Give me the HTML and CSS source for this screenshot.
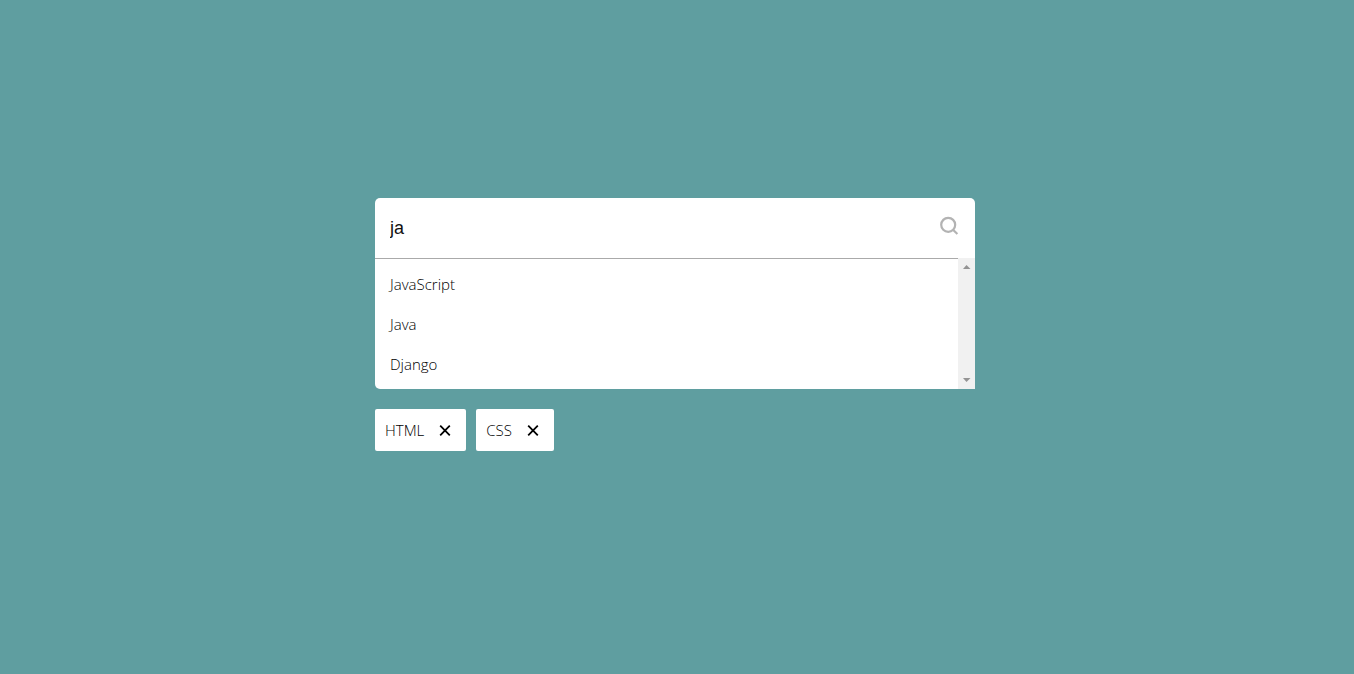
FILE: index.html
```
<!DOCTYPE html>
<html lang="en">
<head>
<meta charset="utf-8">
<meta name="viewport" content="width=device-width, initial-scale=1">
<title>Skill search</title>
<link rel="stylesheet" href="styles.css">
</head>
<body>
<main class="picker">
  <div class="search">
    <div class="field">
      <input class="input" type="text" value="ja" aria-label="Search skills">
      <svg class="search-icon" viewBox="0 0 20 20" aria-hidden="true"><circle cx="8.2" cy="8.8" r="7"/><path d="M13 13.7l4.4 4.3"/></svg>
    </div>
    <div class="results">
      <ul class="options">
        <li class="option">JavaScript</li>
        <li class="option">Java</li>
        <li class="option">Django</li>
      </ul>
      <div class="scrollbar" aria-hidden="true">
        <svg class="arrow" viewBox="0 0 8 4"><path d="M0 4L3.5 0L7.5 4z"/></svg>
        <svg class="arrow" viewBox="0 0 8 4"><path d="M0 0L3.5 4L7.5 0z"/></svg>
      </div>
    </div>
  </div>
  <ul class="tags">
    <li class="tag">HTML
      <button class="remove" type="button" aria-label="Remove HTML"><svg class="cross" viewBox="0 0 12 12" aria-hidden="true"><path d="M1.2 1.7l9.6 9.6M10.8 1.7l-9.6 9.6"/></svg></button>
    </li>
    <li class="tag">CSS
      <button class="remove" type="button" aria-label="Remove CSS"><svg class="cross" viewBox="0 0 12 12" aria-hidden="true"><path d="M1.2 1.7l9.6 9.6M10.8 1.7l-9.6 9.6"/></svg></button>
    </li>
  </ul>
</main>
</body>
</html>
```
FILE: styles.css
```
* {
  box-sizing: border-box;
}

body {
  display: flex;
  align-items: center;
  justify-content: center;
  min-height: 100vh;
  margin: 0;
  padding: 0 4px 25px 0;
  background: #5f9ea0;
  color: #000;
  font: 300 15px/20px "Open Sans", "Noto Sans", sans-serif;
}

.picker {
  width: 100%;
  max-width: 600px;
}

.search {
  background: #fff;
  border-radius: 5px 5px 0 5px;
}

.field {
  display: flex;
  align-items: center;
  height: 60px;
  padding: 0 15px;
}

.input {
  flex: 1;
  min-width: 0;
  padding: 0;
  border: 0;
  outline: 0;
  background: none;
  color: #111;
  font: 18px/24px "Liberation Sans", Arial, sans-serif;
}

.search-icon {
  width: 20px;
  height: 20px;
  margin-bottom: 4px;
  fill: none;
  stroke: #b3b3b3;
  stroke-width: 2.2;
}

.results {
  display: flex;
}

.options {
  flex: 1;
  margin: 0;
  padding: 5px 0;
  border-top: 1px solid #aaa;
  list-style: none;
}

.option {
  padding: 10px 15px;
}

.scrollbar {
  display: flex;
  flex-direction: column;
  justify-content: space-between;
  align-items: center;
  width: 17px;
  padding: 7px 0;
  background: #f1f1f1;
}

.arrow {
  width: 8px;
  height: 4px;
  fill: #949494;
}

.tags {
  display: flex;
  flex-wrap: wrap;
  gap: 10px;
  margin: 20px 0 0;
  padding: 0;
  list-style: none;
}

.tag {
  display: flex;
  align-items: center;
  gap: 15px;
  height: 42px;
  padding: 0 15px 0 10px;
  background: #fff;
  border-radius: 2px;
}

.remove {
  display: flex;
  padding: 0;
  border: 0;
  background: none;
  cursor: pointer;
}

.cross {
  width: 12px;
  height: 12px;
  fill: none;
  stroke: #000;
  stroke-width: 1.8;
}
```
